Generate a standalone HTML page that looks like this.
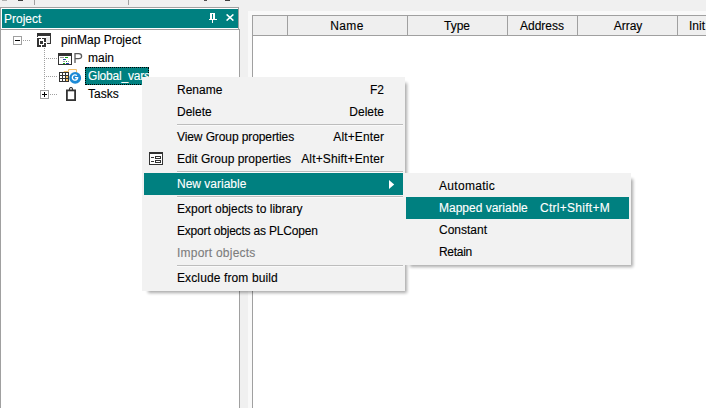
<!DOCTYPE html>
<html><head><meta charset="utf-8">
<style>
*{margin:0;padding:0;box-sizing:border-box}
html,body{width:706px;height:408px;overflow:hidden;background:#f0f0f0;font-family:"Liberation Sans",sans-serif;font-size:12px;color:#000}
.mi,.t{-webkit-text-stroke:0.12px currentColor}
.a{position:absolute}
.t{position:absolute;white-space:nowrap;line-height:18px}
.dv{position:absolute;width:1px;background:repeating-linear-gradient(to bottom,#a0a0a0 0,#a0a0a0 1px,transparent 1px,transparent 2px)}
.dh{position:absolute;height:1px;background:repeating-linear-gradient(to right,#a0a0a0 0,#a0a0a0 1px,transparent 1px,transparent 2px)}
.mi{position:absolute;left:0;width:259px;height:22px;line-height:22px;white-space:nowrap}
.mi .l{position:absolute;left:33px;top:0}
.mi .r{position:absolute;right:19px;top:0}
.sep{position:absolute;left:35px;right:2px;height:1px;background:#bdbdbd;box-shadow:0 1px 0 #fafafa}
.hl{background:#008080;color:#fff}
</style></head><body>

<!-- toolbar remnants -->
<div class="a" style="left:34px;top:0;width:1px;height:5px;background:#a0a0a0"></div>
<div class="a" style="left:128px;top:0;width:1px;height:5px;background:#a0a0a0"></div>
<div class="a" style="left:2px;top:0;width:5px;height:1px;background:#b0b0b0"></div>
<div class="a" style="left:18px;top:0;width:5px;height:1px;background:#404040"></div>
<div class="a" style="left:204px;top:0;width:3px;height:1px;background:#505050"></div>
<div class="a" style="left:225px;top:0;width:5px;height:1px;background:#404040"></div>

<!-- left panel -->
<div class="a" style="left:0;top:7px;width:239px;height:23px;border:1px solid #a0a0a0;background:#fff"></div>
<div class="a" style="left:2px;top:9px;width:236px;height:19px;background:#008080"></div>
<div class="t" style="left:4px;top:10px;line-height:19px;color:#fff">Project</div>
<!-- pin -->
<svg class="a" style="left:209px;top:13px" width="8" height="10" viewBox="0 0 8 10" shape-rendering="crispEdges">
  <rect x="1" y="0" width="5" height="6" fill="#fff"/>
  <rect x="3" y="1" width="1" height="5" fill="#008080"/>
  <rect x="0" y="6" width="8" height="1" fill="#fff"/>
  <rect x="3" y="7" width="1" height="3" fill="#fff"/>
</svg>
<!-- close -->
<svg class="a" style="left:226px;top:14px" width="8" height="7" viewBox="0 0 8 7">
  <path d="M0.6 0.4L7.4 6.6M7.4 0.4L0.6 6.6" stroke="#fff" stroke-width="1.5" fill="none"/>
</svg>

<div class="a" style="left:0;top:29px;width:240px;height:379px;border:1px solid #a0a0a0;border-bottom:none;background:#fff"></div>

<!-- tree -->
<div class="a" style="left:13px;top:36px;width:9px;height:9px;border:1px solid #a0a0a0;background:#fff"></div>
<div class="a" style="left:15px;top:40px;width:5px;height:1px;background:#000"></div>
<div class="dh" style="left:23px;top:40px;width:8px"></div>
<!-- project icon -->
<svg class="a" style="left:37px;top:33px" width="14" height="14" viewBox="0 0 14 14" shape-rendering="crispEdges">
  <rect x="9" y="4" width="4" height="6" fill="#ebebeb"/>
  <rect x="0" y="0" width="14" height="3" fill="#333"/>
  <rect x="0" y="3" width="1" height="1" fill="#333"/>
  <rect x="13" y="3" width="1" height="8" fill="#333"/>
  <rect x="10" y="10" width="4" height="1" fill="#333"/>
  <rect x="0" y="5" width="2" height="9" fill="#333"/>
  <rect x="0" y="5" width="4" height="1" fill="#333"/>
  <rect x="5" y="5" width="4" height="1" fill="#333"/>
  <rect x="7" y="5" width="2" height="4" fill="#333"/>
  <rect x="3" y="8" width="3" height="3" fill="#333"/>
  <rect x="0" y="12" width="4" height="2" fill="#333"/>
  <rect x="5" y="12" width="4" height="2" fill="#333"/>
  <rect x="7" y="10" width="2" height="4" fill="#333"/>
</svg>
<div class="t" style="left:61px;top:31px">pinMap Project</div>

<div class="dv" style="left:44px;top:48px;height:42px"></div>
<div class="dh" style="left:46px;top:58px;width:12px"></div>
<!-- main icon -->
<svg class="a" style="left:58px;top:53px" width="14" height="12" viewBox="0 0 14 12" shape-rendering="crispEdges">
  <rect x="0" y="0" width="14" height="12" fill="#333"/>
  <rect x="1" y="3" width="12" height="8" fill="#fff"/>
  <rect x="2" y="4" width="4" height="1" fill="#999"/>
  <rect x="7" y="4" width="3" height="1" fill="#1a1"/>
  <rect x="5" y="6" width="3" height="1" fill="#24a"/>
  <rect x="5" y="8" width="2" height="1" fill="#999"/>
  <rect x="8" y="8" width="1" height="1" fill="#1a1"/>
  <rect x="10" y="8" width="1" height="1" fill="#999"/>
  <rect x="5" y="10" width="2" height="1" fill="#1a1"/>
  <rect x="8" y="10" width="3" height="1" fill="#24a"/>
</svg>
<svg class="a" style="left:74px;top:53px" width="9" height="10" viewBox="0 0 9 10">
  <path d="M1 10V0.7H4.6Q7.6 0.7 7.6 3.2Q7.6 5.7 4.6 5.7H1" stroke="#5a5a5a" stroke-width="1.3" fill="none"/>
</svg>
<div class="t" style="left:88px;top:49px">main</div>

<div class="dh" style="left:46px;top:76px;width:12px"></div>
<!-- global icon -->
<svg class="a" style="left:59px;top:68px" width="24" height="17" viewBox="0 0 24 17">
  <path d="M5 4V3.5H9.5V1.5H17.5V5" stroke="#f3c06a" stroke-width="1" fill="#fafafa"/>
  <rect x="0" y="4" width="10" height="10" fill="#333"/>
  <rect x="1" y="5" width="2" height="2" fill="#fff"/>
  <rect x="4" y="5" width="2" height="2" fill="#fff"/>
  <rect x="7" y="5" width="2" height="2" fill="#fff"/>
  <rect x="1" y="8" width="2" height="2" fill="#fff"/>
  <rect x="4" y="8" width="2" height="2" fill="#fff"/>
  <rect x="7" y="8" width="2" height="2" fill="#f6c46a"/>
  <rect x="1" y="11" width="2" height="2" fill="#fff"/>
  <rect x="4" y="11" width="2" height="2" fill="#fff"/>
  <rect x="7" y="11" width="2" height="2" fill="#f6c46a"/>
  <circle cx="16.2" cy="9.9" r="5.95" fill="#1c8ad6"/>
  <path d="M17.9 7.65A2.65 2.65 0 1 0 18.65 9.6H15.9" stroke="#fff" stroke-width="1.35" fill="none"/>
</svg>
<div class="a" style="left:85px;top:67px;width:64px;height:18px;background:#008080;outline:1px dotted #000;outline-offset:-1px"></div>
<div class="t" style="left:88px;top:67px;color:#fff;letter-spacing:-0.2px">Global_vars</div>

<div class="a" style="left:40px;top:90px;width:9px;height:9px;border:1px solid #a0a0a0;background:#fff"></div>
<div class="a" style="left:42px;top:94px;width:5px;height:1px;background:#000"></div>
<div class="a" style="left:44px;top:92px;width:1px;height:5px;background:#000"></div>
<div class="dh" style="left:50px;top:94px;width:8px"></div>
<!-- tasks icon -->
<svg class="a" style="left:66px;top:87px" width="10" height="14" viewBox="0 0 10 14">
  <path d="M3.5 3.2V2A1.5 1.5 0 0 1 6.5 2V3.2" stroke="#333" stroke-width="1.1" fill="none"/>
  <rect x="0.9" y="3.4" width="8.2" height="9.7" stroke="#333" stroke-width="1.8" fill="#fff"/>
</svg>
<div class="t" style="left:88px;top:85px">Tasks</div>

<!-- right panel -->
<div class="a" style="left:248px;top:11px;width:458px;height:397px;background:#f9f9f9"></div>
<div class="a" style="left:252px;top:15px;width:454px;height:393px;border:1px solid #a0a0a0;border-right:none;border-bottom:none;background:#fff"></div>
<div class="a" style="left:253px;top:16px;width:453px;height:19px;background:#efefef;border-bottom:1px solid #a0a0a0;box-sizing:content-box"></div>
<div class="a" style="left:287px;top:16px;width:1px;height:19px;background:#a0a0a0"></div>
<div class="a" style="left:407px;top:16px;width:1px;height:19px;background:#a0a0a0"></div>
<div class="a" style="left:507px;top:16px;width:1px;height:19px;background:#a0a0a0"></div>
<div class="a" style="left:577px;top:16px;width:1px;height:19px;background:#a0a0a0"></div>
<div class="a" style="left:677px;top:16px;width:1px;height:19px;background:#a0a0a0"></div>
<div class="t" style="left:287px;width:120px;text-align:center;top:17px;line-height:19px;letter-spacing:0.4px">Name</div>
<div class="t" style="left:407px;width:100px;text-align:center;top:17px;line-height:19px">Type</div>
<div class="t" style="left:507px;width:70px;text-align:center;top:17px;line-height:19px">Address</div>
<div class="t" style="left:578px;width:100px;text-align:center;top:17px;line-height:19px">Array</div>
<div class="t" style="left:689px;top:17px;line-height:19px">Init</div>

<!-- context menu -->
<div class="a" style="left:142px;top:77px;width:263px;height:214px;background:#f2f2f2;box-shadow:4px 4px 3px -2px rgba(0,0,0,0.33)">
  <div class="mi" style="top:2px;left:2px"><span class="l">Rename</span><span class="r">F2</span></div>
  <div class="mi" style="top:24px;left:2px"><span class="l">Delete</span><span class="r">Delete</span></div>
  <div class="sep" style="top:47px"></div>
  <div class="mi" style="top:49px;left:2px"><span class="l" style="letter-spacing:-0.1px">View Group properties</span><span class="r" style="letter-spacing:0.13px;right:18.87px">Alt+Enter</span></div>
  <div class="mi" style="top:71px;left:2px"><span class="l">Edit Group properties</span><span class="r" style="letter-spacing:0.15px;right:18.85px">Alt+Shift+Enter</span></div>
  <svg class="a" style="left:7px;top:75px" width="14" height="13" viewBox="0 0 14 13" shape-rendering="crispEdges">
    <rect x="0" y="0" width="14" height="13" fill="#333"/>
    <rect x="1" y="2" width="12" height="10" fill="#fff"/>
    <rect x="2" y="5" width="3" height="1" fill="#333"/>
    <rect x="2" y="9" width="3" height="1" fill="#333"/>
    <rect x="6" y="4" width="6" height="3" fill="#333"/>
    <rect x="7" y="5" width="4" height="1" fill="#fff"/>
    <rect x="6" y="8" width="6" height="3" fill="#333"/>
    <rect x="7" y="9" width="4" height="1" fill="#fff"/>
  </svg>
  <div class="sep" style="top:94px"></div>
  <div class="mi hl" style="top:96px;left:2px"><span class="l">New variable</span></div>
  <svg class="a" style="left:247px;top:103px" width="6" height="9" viewBox="0 0 6 9"><path d="M0 0L5.2 4.5L0 9Z" fill="#fff"/></svg>
  <div class="sep" style="top:119px"></div>
  <div class="mi" style="top:121px;left:2px"><span class="l">Export objects to library</span></div>
  <div class="mi" style="top:143px;left:2px"><span class="l" style="letter-spacing:-0.19px">Export objects as PLCopen</span></div>
  <div class="mi" style="top:165px;left:2px;color:#7d7d7d"><span class="l" style="letter-spacing:0.23px">Import objects</span></div>
  <div class="sep" style="top:188px"></div>
  <div class="mi" style="top:190px;left:2px"><span class="l" style="letter-spacing:0.12px">Exclude from build</span></div>
</div>

<!-- submenu -->
<div class="a" style="left:404px;top:173px;width:227px;height:92px;background:#f2f2f2;box-shadow:4px 4px 3px -2px rgba(0,0,0,0.33)">
  <div class="mi" style="top:2px;left:2px;width:223px"><span class="l" style="letter-spacing:0.3px">Automatic</span></div>
  <div class="mi hl" style="top:24px;left:2px;width:223px"><span class="l">Mapped variable</span><span class="r" style="right:auto;left:134px;letter-spacing:0.27px">Ctrl+Shift+M</span></div>
  <div class="mi" style="top:46px;left:2px;width:223px"><span class="l">Constant</span></div>
  <div class="mi" style="top:68px;left:2px;width:223px"><span class="l" style="letter-spacing:-0.3px">Retain</span></div>
</div>

</body></html>
